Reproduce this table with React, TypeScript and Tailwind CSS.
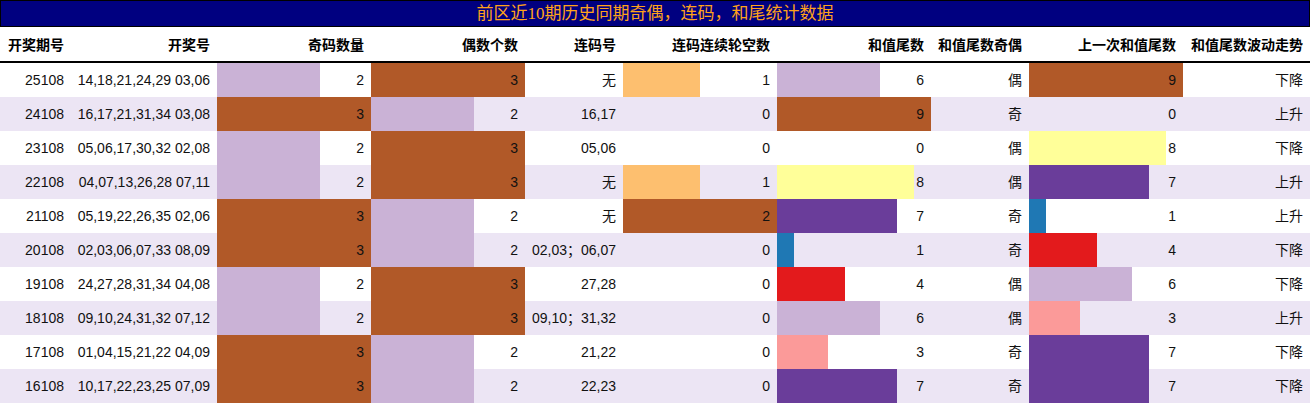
import React from "react";

const COLS = "grid-cols-[71px_146px_154px_154px_98px_154px_154px_98px_154px_127px]";

const PAIRED: Record<string, string> = {
  brown: "#b15928",
  lilac: "#cab2d6",
  purple: "#6a3d9a",
  blue: "#1f78b4",
  red: "#e31a1c",
  pink: "#fb9a99",
  yellow: "#ffff99",
  orange: "#fdbf6f",
};

// colour by value for each bar column
const countColor = (v: number) => (v === 3 ? PAIRED.brown : PAIRED.lilac);
const gapColor = (v: number) => (v === 2 ? PAIRED.brown : PAIRED.orange);
const tailColor = (v: number) =>
  ({ 1: PAIRED.blue, 3: PAIRED.pink, 4: PAIRED.red, 6: PAIRED.lilac, 7: PAIRED.purple, 8: PAIRED.yellow, 9: PAIRED.brown } as Record<number, string>)[v] ?? "transparent";

interface Row {
  issue: string;
  nums: string;
  odd: number;
  even: number;
  pairs: string;
  gap: number;
  tail: number;
  parity: string;
  prev: number;
  trend: string;
}

const rows: Row[] = [
  { issue: "25108", nums: "14,18,21,24,29 03,06", odd: 2, even: 3, pairs: "无", gap: 1, tail: 6, parity: "偶", prev: 9, trend: "下降" },
  { issue: "24108", nums: "16,17,21,31,34 03,08", odd: 3, even: 2, pairs: "16,17", gap: 0, tail: 9, parity: "奇", prev: 0, trend: "上升" },
  { issue: "23108", nums: "05,06,17,30,32 02,08", odd: 2, even: 3, pairs: "05,06", gap: 0, tail: 0, parity: "偶", prev: 8, trend: "下降" },
  { issue: "22108", nums: "04,07,13,26,28 07,11", odd: 2, even: 3, pairs: "无", gap: 1, tail: 8, parity: "偶", prev: 7, trend: "上升" },
  { issue: "21108", nums: "05,19,22,26,35 02,06", odd: 3, even: 2, pairs: "无", gap: 2, tail: 7, parity: "奇", prev: 1, trend: "上升" },
  { issue: "20108", nums: "02,03,06,07,33 08,09", odd: 3, even: 2, pairs: "02,03；06,07", gap: 0, tail: 1, parity: "奇", prev: 4, trend: "下降" },
  { issue: "19108", nums: "24,27,28,31,34 04,08", odd: 2, even: 3, pairs: "27,28", gap: 0, tail: 4, parity: "偶", prev: 6, trend: "下降" },
  { issue: "18108", nums: "09,10,24,31,32 07,12", odd: 2, even: 3, pairs: "09,10；31,32", gap: 0, tail: 6, parity: "偶", prev: 3, trend: "上升" },
  { issue: "17108", nums: "01,04,15,21,22 04,09", odd: 3, even: 2, pairs: "21,22", gap: 0, tail: 3, parity: "奇", prev: 7, trend: "下降" },
  { issue: "16108", nums: "10,17,22,23,25 07,09", odd: 3, even: 2, pairs: "22,23", gap: 0, tail: 7, parity: "奇", prev: 7, trend: "下降" },
];

const headers = ["开奖期号", "开奖号", "奇码数量", "偶数个数", "连码号", "连码连续轮空数", "和值尾数", "和值尾数奇偶", "上一次和值尾数", "和值尾数波动走势"];

function Text({ children }: { children: React.ReactNode }) {
  return <div className="flex items-center justify-end pr-[7px] whitespace-nowrap">{children}</div>;
}

function Bar({ value, max, color }: { value: number; max: number; color: string }) {
  return (
    <div className="relative flex items-center justify-end pr-[7px]">
      <div className="absolute inset-y-0 left-0" style={{ width: `${(value / max) * 100}%`, background: color }} />
      <span className="relative">{value}</span>
    </div>
  );
}

export default function App() {
  return (
    <div className="w-[1310px] h-[404px] bg-white text-[14px] text-[#111] font-['Liberation_Sans','Noto_Sans_CJK_SC',sans-serif] overflow-hidden">
      <div className="h-[27px] bg-[#000080] border border-black flex items-center justify-center text-[17px] text-[#ffa31a] font-['Liberation_Serif','Noto_Sans_CJK_SC',serif]">
        前区近10期历史同期奇偶，连码，和尾统计数据
      </div>
      <div className={`grid ${COLS} h-[36px] border-b-2 border-black font-bold font-['Noto_Sans_CJK_SC',sans-serif] text-[14px] text-black`}>
        {headers.map((h) => (
          <div key={h} className="flex items-center justify-end pr-[7px] whitespace-nowrap">
            {h}
          </div>
        ))}
      </div>
      {rows.map((r, i) => (
        <div key={r.issue} className={`grid ${COLS} h-[34px] ${i % 2 === 1 ? "bg-[#ece5f4]" : "bg-white"}`}>
          <Text>{r.issue}</Text>
          <Text>{r.nums}</Text>
          <Bar value={r.odd} max={3} color={countColor(r.odd)} />
          <Bar value={r.even} max={3} color={countColor(r.even)} />
          <Text>{r.pairs}</Text>
          <Bar value={r.gap} max={2} color={gapColor(r.gap)} />
          <Bar value={r.tail} max={9} color={tailColor(r.tail)} />
          <Text>{r.parity}</Text>
          <Bar value={r.prev} max={9} color={tailColor(r.prev)} />
          <Text>{r.trend}</Text>
        </div>
      ))}
    </div>
  );
}
